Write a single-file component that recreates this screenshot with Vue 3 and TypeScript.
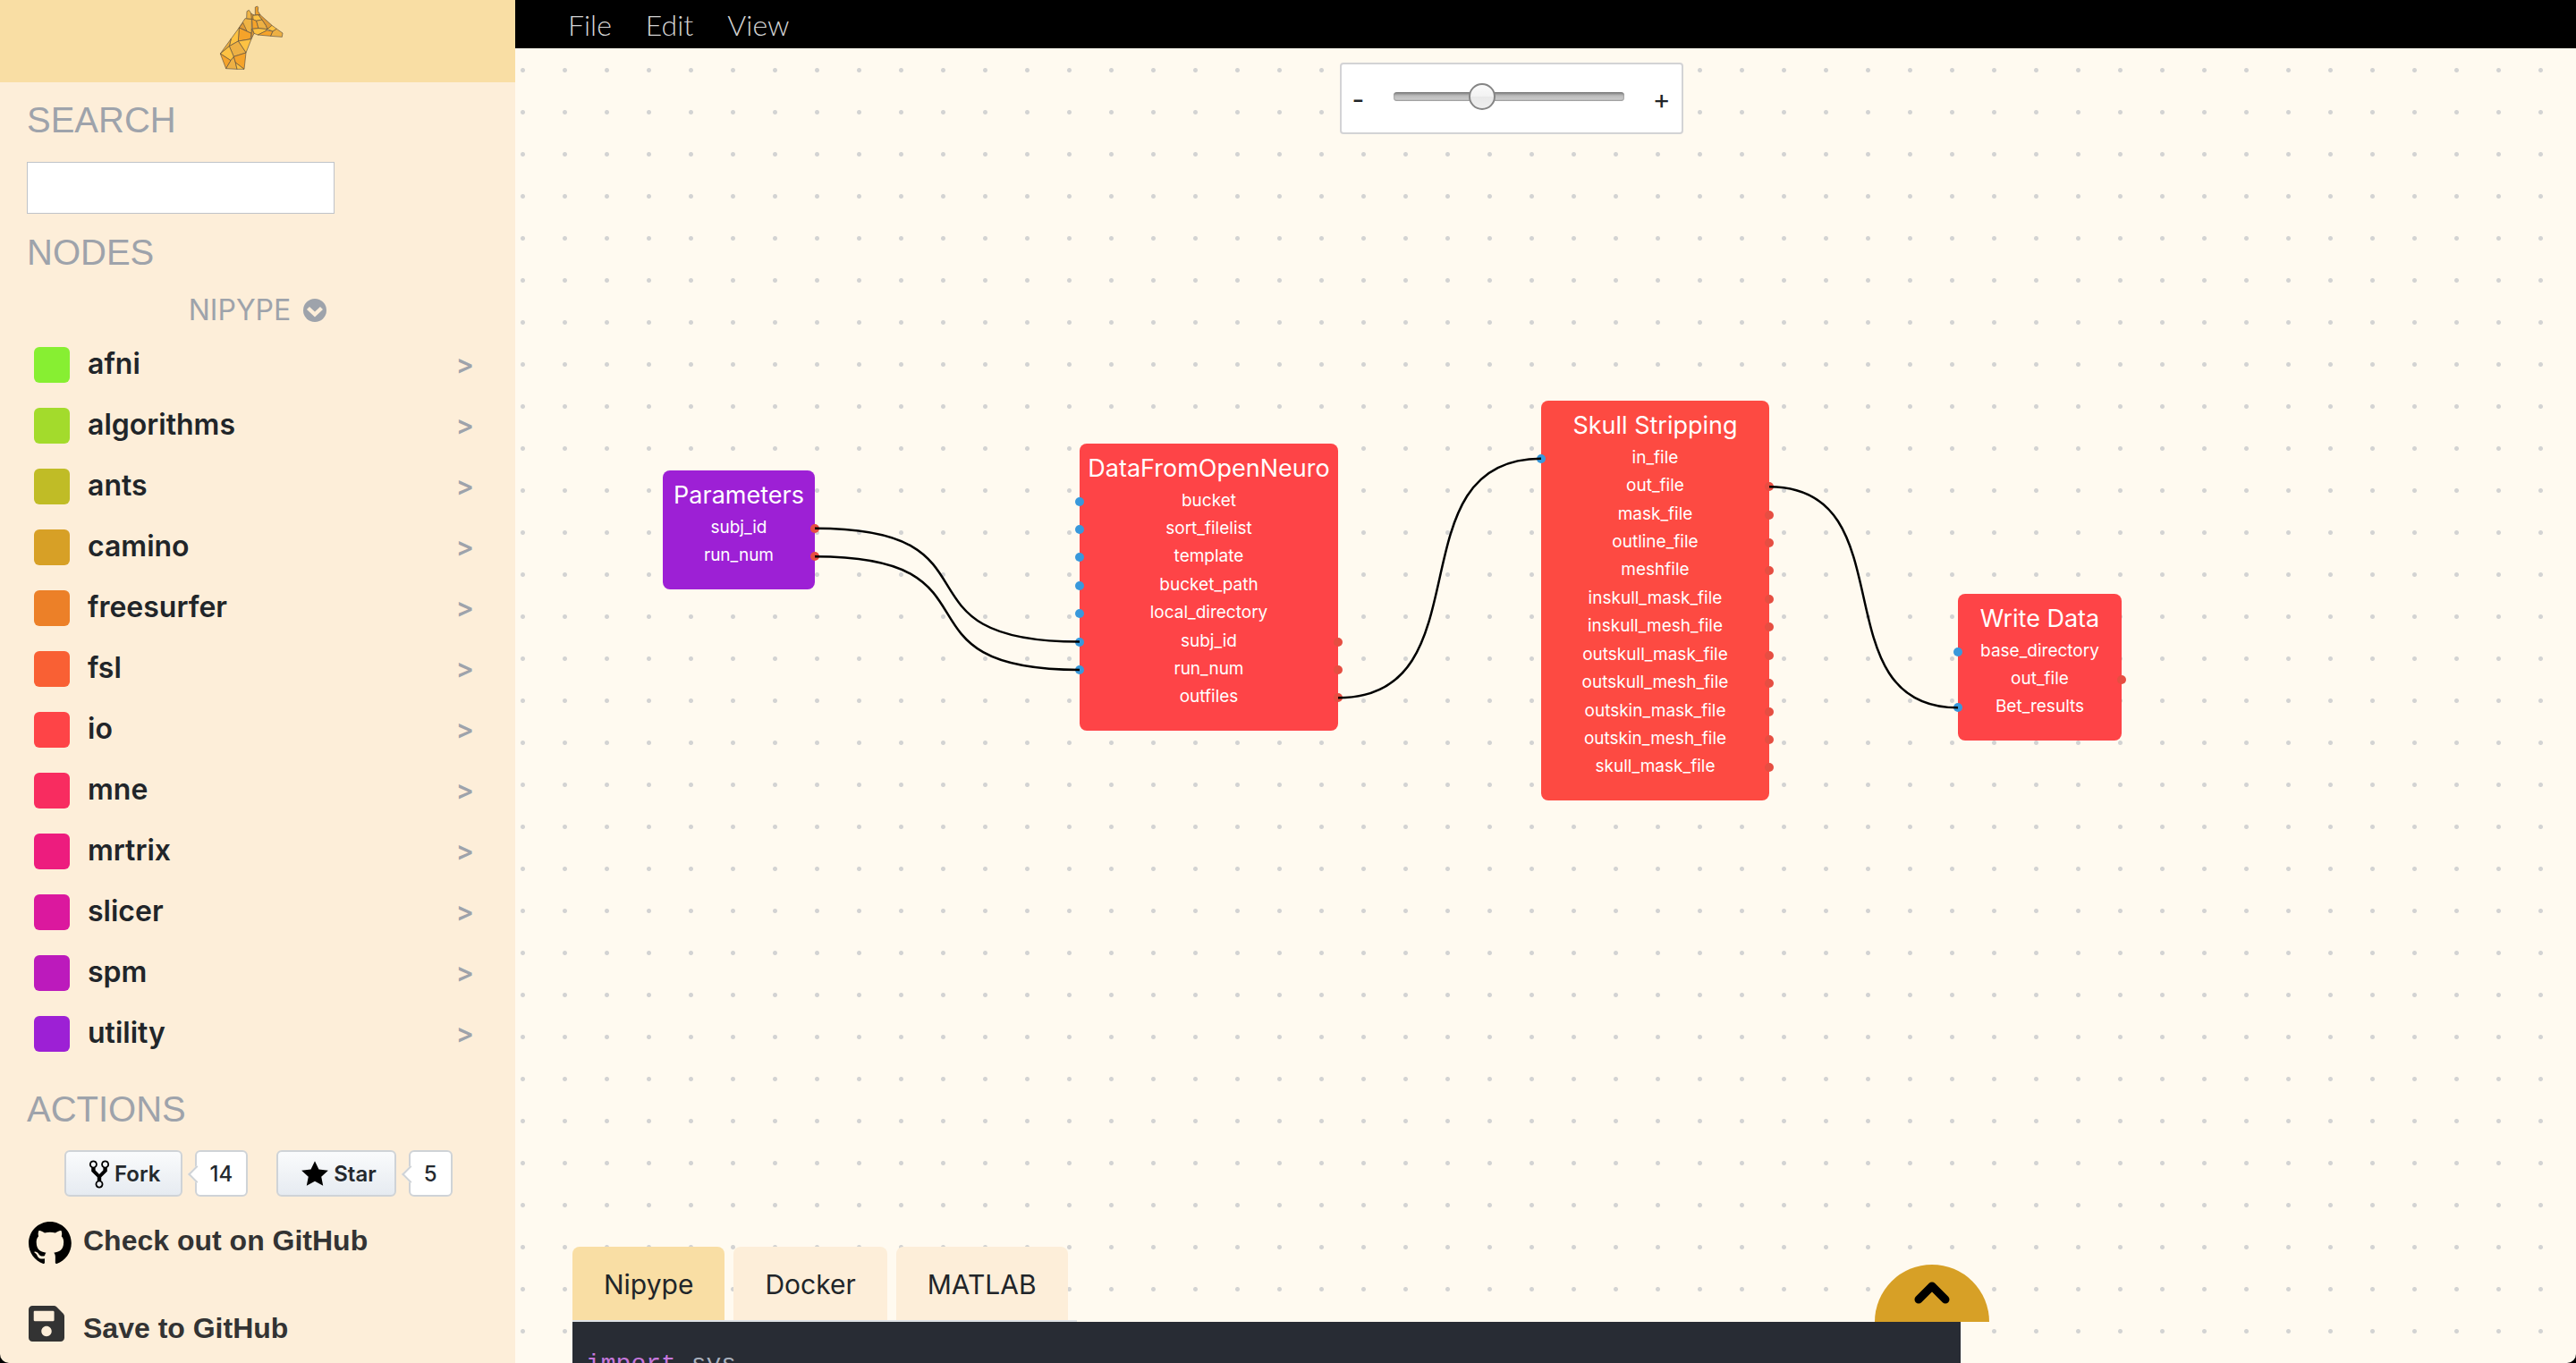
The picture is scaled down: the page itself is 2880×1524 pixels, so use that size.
<script setup lang="ts">
import { computed, ref } from 'vue'

interface Category { name: string; color: string }
interface Port { name: string; input?: boolean; output?: boolean }
interface FlowNode { id: string; title: string; x: number; y: number; width: number; height: number; color: string; ports: Port[] }
interface Link { from: [string, string]; to: [string, string] }

const TITLE_HEIGHT = 49
const FOOTER_HEIGHT = 21
const CURVE = 0.74

const search = ref('')
const zoom = ref(37)
const activeTab = ref('Nipype')
const menus = ['File', 'Edit', 'View']
const tabs = ['Nipype', 'Docker', 'MATLAB']

const categories: Category[] = [
  { name: 'afni', color: '#87ef32' },
  { name: 'algorithms', color: '#a3db2c' },
  { name: 'ants', color: '#c0bc26' },
  { name: 'camino', color: '#d7a026' },
  { name: 'freesurfer', color: '#ec8028' },
  { name: 'fsl', color: '#f96034' },
  { name: 'io', color: '#fe4447' },
  { name: 'mne', color: '#f82c60' },
  { name: 'mrtrix', color: '#ed1c7e' },
  { name: 'slicer', color: '#db189e' },
  { name: 'spm', color: '#bc1abc' },
  { name: 'utility', color: '#9d20d5' },
]

const outputs = (...names: string[]): Port[] => names.map((name) => ({ name, output: true }))
const inputs = (...names: string[]): Port[] => names.map((name) => ({ name, input: true }))

const nodes: FlowNode[] = [
  {
    id: 'params', title: 'Parameters', x: 165, y: 472, width: 170, height: 133, color: '#9d20d5',
    ports: outputs('subj_id', 'run_num'),
  },
  {
    id: 'data', title: 'DataFromOpenNeuro', x: 631, y: 442, width: 289, height: 321, color: '#fe4447',
    ports: [
      ...inputs('bucket', 'sort_filelist', 'template', 'bucket_path', 'local_directory'),
      { name: 'subj_id', input: true, output: true },
      { name: 'run_num', input: true, output: true },
      ...outputs('outfiles'),
    ],
  },
  {
    id: 'skull', title: 'Skull Stripping', x: 1147, y: 394, width: 255, height: 447, color: '#fd4a42',
    ports: [
      ...inputs('in_file'),
      ...outputs('out_file', 'mask_file', 'outline_file', 'meshfile', 'inskull_mask_file', 'inskull_mesh_file',
        'outskull_mask_file', 'outskull_mesh_file', 'outskin_mask_file', 'outskin_mesh_file', 'skull_mask_file'),
    ],
  },
  {
    id: 'write', title: 'Write Data', x: 1613, y: 610, width: 183, height: 164, color: '#fe4447',
    ports: [...inputs('base_directory'), ...outputs('out_file'), ...inputs('Bet_results')],
  },
]

const links: Link[] = [
  { from: ['params', 'subj_id'], to: ['data', 'subj_id'] },
  { from: ['params', 'run_num'], to: ['data', 'run_num'] },
  { from: ['data', 'outfiles'], to: ['skull', 'in_file'] },
  { from: ['skull', 'out_file'], to: ['write', 'Bet_results'] },
]

function anchor([id, port]: [string, string], side: 'left' | 'right') {
  const node = nodes.find((n) => n.id === id)!
  const index = node.ports.findIndex((p) => p.name === port)
  const row = (node.height - TITLE_HEIGHT - FOOTER_HEIGHT) / node.ports.length
  return {
    x: side === 'left' ? node.x : node.x + node.width,
    y: node.y + TITLE_HEIGHT + row * (index + 0.5),
  }
}

const paths = computed(() => links.map((link) => {
  const a = anchor(link.from, 'right')
  const b = anchor(link.to, 'left')
  const reach = (b.x - a.x) * CURVE
  return `M${a.x} ${a.y}C${a.x + reach} ${a.y} ${b.x - reach} ${b.y} ${b.x} ${b.y}`
}))

const giraffe: [string, string][] = [
  ['162,62 184,64 184,112 142,93', '#f0b445'],
  ['155,76 142,93 168,104', '#e09a35'],
  ['142,93 183,112 180,131 139,138', '#f5a32a'],
  ['142,93 139,138 109,155 115,130', '#fdc243'],
  ['115,130 109,155 79,180', '#eeb040'],
  ['139,138 183,131 165,177', '#fdc243'],
  ['139,138 165,177 124,190 109,155', '#edb044'],
  ['109,155 124,190 114,203 79,180', '#fdc243'],
  ['79,180 114,203 98,230', '#f5a32a'],
  ['114,203 124,190 130,210 135,232 98,230', '#edb044'],
  ['124,190 165,177 159,232 130,210', '#f5a32a'],
  ['130,210 159,232 135,232', '#fdc243'],
  ['168,38 175,34 186,50 184,64 167,62', '#f0b445'],
  ['196,24 203,21 206,25 205,37 213,50 196,50', '#eda02c'],
  ['182,46 196,52 189,66 184,64', '#e09a35'],
  ['188,52 207,50 219,66 200,70 189,66', '#fdc243'],
  ['185,64 200,70 207,95 187,97', '#f5a32a'],
  ['200,70 219,66 232,85 237,98 207,95', '#edb044'],
  ['219,66 207,50 213,50 252,85 237,98 232,85', '#e09a35'],
  ['187,97 207,95 237,98 225,108 205,117 192,112', '#fdc243'],
  ['205,117 235,102 255,105 248,121', '#f5a32a'],
  ['237,98 252,85 268,97 255,105', '#fdc243'],
  ['255,105 268,97 288,111 286,124 248,121', '#edb044'],
  ['184,97 192,112 183,131', '#e09a35'],
]
</script>

<template>
  <div class="app">
    <aside class="sidebar">
      <header class="brand">
        <svg class="logo" viewBox="75 18 258 216" aria-label="Giraffe" role="img">
          <polygon v-for="([points, fill], i) in giraffe" :key="i" :points="points" :fill="fill" stroke="#5d5040" stroke-width="2" stroke-linejoin="round" />
        </svg>
      </header>

      <div class="content">
        <h2><label for="search">SEARCH</label></h2>
        <input id="search" v-model="search" class="search" type="text">

        <h2>NODES</h2>
        <button class="library" type="button">
          NIPYPE
          <svg viewBox="0 0 26 26" aria-hidden="true">
            <circle cx="13" cy="13" r="13" fill="#9ea3ab" />
            <path d="M5.5 10.5L13 17.5L20.5 10.5" fill="none" stroke="#fdeed9" stroke-width="4.4" />
          </svg>
        </button>

        <ul class="categories">
          <li v-for="c in categories" :key="c.name">
            <button type="button" class="category">
              <span class="swatch" :style="{ background: c.color }"></span>
              <span class="name">{{ c.name }}</span>
              <span class="more">&gt;</span>
            </button>
          </li>
        </ul>

        <h2>ACTIONS</h2>
        <div class="social">
          <a class="gh-button" href="#fork">
            <svg class="fork" viewBox="0 0 10 16" aria-hidden="true"><path d="M8 1a1.993 1.993 0 0 0-1 3.72V6L5 8 3 6V4.72A1.993 1.993 0 0 0 2 1a1.993 1.993 0 0 0-1 3.72V6.5l3 3v1.78A1.993 1.993 0 0 0 5 15a1.993 1.993 0 0 0 1-3.72V9.5l3-3V4.72A1.993 1.993 0 0 0 8 1zM2 4.2C1.34 4.2.8 3.65.8 3c0-.65.55-1.2 1.2-1.2.65 0 1.2.55 1.2 1.2 0 .65-.55 1.2-1.2 1.2zm3 10c-.66 0-1.2-.55-1.2-1.2 0-.65.55-1.2 1.2-1.2.65 0 1.2.55 1.2 1.2 0 .65-.55 1.2-1.2 1.2zm3-10c-.66 0-1.2-.55-1.2-1.2 0-.65.55-1.2 1.2-1.2.65 0 1.2.55 1.2 1.2 0 .65-.55 1.2-1.2 1.2z" /></svg>
            Fork
          </a>
          <a class="gh-count" href="#forks">14</a>
          <a class="gh-button second" href="#star">
            <svg class="star" viewBox="0 0 14 16" aria-hidden="true"><path d="M14 6l-4.9-.64L7 1 4.9 5.36 0 6l3.6 3.26L2.67 14 7 11.67 11.33 14l-.93-4.74z" /></svg>
            Star
          </a>
          <a class="gh-count" href="#stars">5</a>
        </div>

        <a class="action checkout" href="#github">
          <svg viewBox="0 0 98 96" aria-hidden="true"><path d="M48.854 0C21.839 0 0 22 0 49.217c0 21.756 13.993 40.172 33.405 46.69 2.427.49 3.316-1.059 3.316-2.362 0-1.141-.08-5.052-.08-9.127-13.59 2.934-16.42-5.867-16.42-5.867-2.184-5.704-5.42-7.17-5.42-7.17-4.448-3.015.324-3.015.324-3.015 4.934.326 7.523 5.052 7.523 5.052 4.367 7.496 11.404 5.378 14.235 4.074.404-3.178 1.699-5.378 3.074-6.6-10.839-1.141-22.243-5.378-22.243-24.283 0-5.378 1.94-9.778 5.014-13.2-.485-1.222-2.184-6.275.486-13.038 0 0 4.125-1.304 13.426 5.052a46.97 46.97 0 0 1 12.214-1.63c4.125 0 8.33.571 12.213 1.63 9.302-6.356 13.427-5.052 13.427-5.052 2.67 6.763.97 11.816.485 13.038 3.155 3.422 5.015 7.822 5.015 13.2 0 18.905-11.404 23.06-22.324 24.283 1.78 1.548 3.316 4.481 3.316 9.126 0 6.6-.08 11.897-.08 13.526 0 1.304.89 2.853 3.316 2.364 19.412-6.52 33.405-24.935 33.405-46.691C97.707 22 75.788 0 48.854 0z" /></svg>
          <span>Check out on GitHub</span>
        </a>
        <button class="action save" type="button">
          <svg viewBox="0 32 512 448" preserveAspectRatio="xMinYMin meet" aria-hidden="true"><path fill="#333" d="M433.941 129.941l-83.882-83.882A48 48 0 0 0 316.118 32H48C21.49 32 0 53.49 0 80v352c0 26.51 21.49 48 48 48h352c26.51 0 48-21.49 48-48V163.882a48 48 0 0 0-14.059-33.941zM224 416c-35.346 0-64-28.654-64-64 0-35.346 28.654-64 64-64s64 28.654 64 64c0 35.346-28.654 64-64 64zm96-304.52V212c0 6.627-5.373 12-12 12H76c-6.627 0-12-5.373-12-12V108c0-6.627 5.373-12 12-12h228.52c3.183 0 6.235 1.264 8.485 3.515l3.48 3.48A11.996 11.996 0 0 1 320 111.48z" /></svg>
          <span>Save to GitHub</span>
        </button>
      </div>
    </aside>

    <main class="workspace">
      <nav class="menubar">
        <button v-for="m in menus" :key="m" type="button">{{ m }}</button>
      </nav>

      <section class="canvas">
        <div class="zoom">
          <span>-</span>
          <input v-model="zoom" type="range" min="0" max="100" aria-label="Zoom">
          <span>+</span>
        </div>

        <article
          v-for="n in nodes"
          :key="n.id"
          class="node"
          :style="{ left: n.x + 'px', top: n.y + 'px', width: n.width + 'px', height: n.height + 'px', background: n.color }"
        >
          <h3>{{ n.title }}</h3>
          <ul>
            <li v-for="p in n.ports" :key="p.name">
              <i v-if="p.input" class="dot in"></i>
              <span>{{ p.name }}</span>
              <i v-if="p.output" class="dot out"></i>
            </li>
          </ul>
        </article>

        <svg class="links" aria-hidden="true">
          <path v-for="(d, i) in paths" :key="i" :d="d" />
        </svg>

        <section class="panel">
          <div class="tabs" role="tablist">
            <button
              v-for="t in tabs"
              :key="t"
              type="button"
              role="tab"
              :aria-selected="t === activeTab"
              :class="{ active: t === activeTab }"
              @click="activeTab = t"
            >{{ t }}</button>
          </div>
          <pre class="code"><code><span class="keyword">import</span> sys</code></pre>
          <button class="expand" type="button" aria-label="Show code">
            <svg viewBox="0 0 40 28" aria-hidden="true"><path d="M5 21L20 6L35 21" fill="none" stroke="#000" stroke-width="9" stroke-linejoin="round" stroke-linecap="round" /></svg>
          </button>
        </section>
      </section>
    </main>
  </div>
</template>

<style>
body {
  margin: 0;
  background: #000;
}
</style>

<style scoped>
* {
  box-sizing: border-box;
}

button {
  border: 0;
  padding: 0;
  background: none;
  font: inherit;
  color: inherit;
  cursor: pointer;
}

ul {
  list-style: none;
  margin: 0;
  padding: 0;
}

.app {
  display: flex;
  height: 100vh;
  overflow: hidden;
  border-radius: 0 0 10px 10px;
  font-family: Inter, sans-serif;
  color: #212529;
}

.sidebar {
  width: 20%;
  background: #fdeed9;
}

.brand {
  display: flex;
  justify-content: center;
  height: 92px;
  padding-top: 6px;
  background: #f9dea4;
}

.logo {
  width: 86px;
  height: 72px;
}

.content {
  display: flex;
  flex-direction: column;
  padding: 18px 30px 0;
}

h2 {
  margin: 0;
  font: 400 40px/48px "Liberation Sans", Arial, sans-serif;
  color: #9ea3ab;
}

.search {
  width: 344px;
  height: 58px;
  margin: 23px 0 19px;
  border: 1px solid #bfc3c9;
  padding: 0 12px;
  background: #fff;
  font-size: 28px;
}

.library {
  display: flex;
  align-items: center;
  align-self: center;
  gap: 14px;
  margin-top: 21px;
  line-height: 40px;
  font-size: 32px;
  color: #9ea3ab;
}

.library svg {
  width: 26px;
  height: 26px;
}

.categories {
  margin: 7px 16px 26px 8px;
}

.category {
  display: flex;
  align-items: center;
  width: 100%;
  height: 68px;
  font-size: 32px;
  line-height: 40px;
  font-weight: 600;
  text-align: left;
}

.swatch {
  width: 40px;
  height: 40px;
  margin-right: 20px;
  border-radius: 6px;
}

.name {
  flex: 1;
  padding-bottom: 2px;
}

.more {
  padding-bottom: 2px;
  font-size: 30px;
  color: #9ea3ab;
}

.social {
  display: flex;
  margin: 22px 0 28px 42px;
}

.gh-button,
.gh-count {
  display: flex;
  align-items: center;
  height: 52px;
  border: 2px solid #cfd3d7;
  border-radius: 6px;
  padding-top: 1px;
  font-size: 24px;
  font-weight: 600;
  color: #24292e;
  text-decoration: none;
}

.gh-button {
  gap: 6px;
  padding-left: 26px;
  padding-right: 22px;
  background: linear-gradient(#fafbfc, #e6ebf1);
}

.gh-button.second {
  margin-left: 32px;
  padding-right: 20px;
}

.gh-count {
  position: relative;
  margin-left: 14px;
  padding-left: 15px;
  padding-right: 15px;
  background: #fff;
  font-weight: 500;
}

.gh-count::before {
  content: "";
  position: absolute;
  left: -7px;
  width: 12px;
  height: 12px;
  border: solid #cfd3d7;
  border-width: 0 0 2px 2px;
  background: #fff;
  transform: rotate(45deg);
}

.fork {
  width: 22px;
  height: 36px;
}

.star {
  width: 30px;
  height: 34px;
}

.action {
  display: flex;
  align-items: flex-start;
  gap: 13px;
  height: 48px;
  margin-left: 2px;
  font: 700 32px/42px "Liberation Sans", Arial, sans-serif;
  color: #333;
  text-decoration: none;
}

.action svg {
  width: 48px;
  height: 47px;
}

.action.save {
  margin-top: 46px;
  line-height: 50px;
}

.action.save svg {
  width: 48px;
  height: 40px;
  overflow: hidden;
}

.workspace {
  display: flex;
  flex: 1;
  flex-direction: column;
}

.menubar {
  display: flex;
  gap: 38px;
  height: 54px;
  padding-left: 59px;
  background: #000;
  font: 300 32px/56px Lato, "Helvetica Neue", sans-serif;
  color: #d3d3d3;
}

.canvas {
  position: relative;
  flex: 1;
  overflow: hidden;
  background: #fffaf0 radial-gradient(circle at center, #d3d3d3 2px, transparent 3px) -15px 1px / 47px 47px;
}

.zoom {
  position: absolute;
  z-index: 2;
  top: 16px;
  left: 40%;
  display: flex;
  align-items: center;
  justify-content: space-between;
  width: 384px;
  height: 80px;
  border: 2px solid #d3d3d5;
  border-radius: 4px;
  padding: 2px 12px 0;
  background: #fff;
  font-size: 30px;
}

.zoom input {
  width: 258px;
  height: 30px;
  margin: 0 0 6px;
  appearance: none;
  background: none;
}

.zoom input::-webkit-slider-runnable-track {
  height: 10px;
  border-radius: 4px;
  background: linear-gradient(#777, #bbb 40%, #c9c9c9 80%, #aaa);
  box-shadow: inset 0 0 2px #777;
}

.zoom input::-webkit-slider-thumb {
  width: 30px;
  height: 30px;
  margin-top: -10px;
  appearance: none;
  border: 2px solid #858585;
  border-radius: 50%;
  background: linear-gradient(#fbfbfb, #f2f2f2 50%, #e8e8e8 50%, #efefef);
}

.node {
  position: absolute;
  display: flex;
  flex-direction: column;
  border-radius: 8px;
  padding-bottom: 21px;
  text-align: center;
  color: #fff;
}

.node h3 {
  height: 49px;
  margin: 0;
  padding-top: 6px;
  font-size: 27px;
  line-height: 43px;
  font-weight: 400;
  white-space: nowrap;
}

.node ul {
  display: flex;
  flex: 1;
  flex-direction: column;
}

.node li {
  position: relative;
  display: flex;
  flex: 1;
  align-items: center;
  justify-content: center;
  padding-bottom: 2px;
  font-size: 19px;
  line-height: 24px;
}

.dot {
  position: absolute;
  top: calc(50% - 5px);
  width: 10px;
  height: 10px;
  border-radius: 50%;
}

.dot.in {
  left: -5px;
  background: #3998db;
}

.dot.out {
  right: -5px;
  background: #e64e42;
}

.links {
  position: absolute;
  inset: 0;
  width: 100%;
  height: 100%;
  pointer-events: none;
}

.links path {
  fill: none;
  stroke: #000;
  stroke-width: 2.5;
}

.panel {
  position: absolute;
  bottom: 0;
  left: 64px;
  width: calc(70% - 61px);
}

.tabs {
  display: inline-flex;
  gap: 10px;
  border-bottom: 2px solid #dee2e6;
  padding-right: 10px;
  vertical-align: top;
}

.tabs button {
  height: 82px;
  border-radius: 8px 8px 0 0;
  padding: 2px 35px 0;
  background: #fdeed9;
  font-size: 30px;
}

.tabs button.active {
  background: #f9dea4;
}

.code {
  height: 46px;
  margin: 0;
  padding: 30px 15px 0;
  overflow: hidden;
  background: #282c34;
  font: 28px/36px "Liberation Mono", monospace;
  color: #abb2bf;
}

.code code {
  font: inherit;
}

.keyword {
  color: #c678dd;
}

.expand {
  position: absolute;
  top: 20px;
  right: -32px;
  display: flex;
  justify-content: center;
  width: 128px;
  height: 64px;
  border-radius: 64px 64px 0 0;
  padding-top: 18px;
  background: #d7a026;
}

.expand svg {
  width: 40px;
  height: 28px;
}
</style>
